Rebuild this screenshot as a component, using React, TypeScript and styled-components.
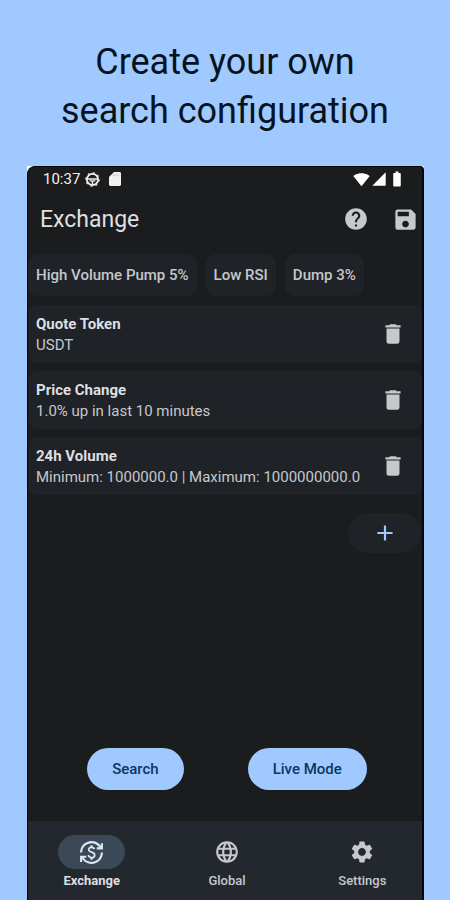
import React from 'react';
import styled, { createGlobalStyle } from 'styled-components';
import {
  MdAdd,
  MdBatteryFull,
  MdCurrencyExchange,
  MdDelete,
  MdHelp,
  MdLanguage,
  MdSave,
  MdSettings,
  MdSignalCellular4Bar,
  MdSignalWifi4Bar,
} from 'react-icons/md';

const color = {
  sky: '#9fc9ff',
  screen: '#1b1c1e',
  card: '#1f2328',
  nav: '#23282e',
  text: '#dedfe2',
  muted: '#c6c8cb',
  onSky: '#0b3765',
};

const GlobalStyle = createGlobalStyle`
  *, *::before, *::after { box-sizing: border-box; }
  body { margin: 0; background: ${color.sky}; font-family: Roboto, "Liberation Sans", sans-serif; }
  button { border: 0; padding: 0; font: inherit; cursor: pointer; }
  svg { display: block; flex: none; }
`;

const Page = styled.div`
  min-height: 100vh;
  display: flex;
  flex-direction: column;
  background: ${color.sky};
`;

const Headline = styled.h1`
  margin: 0;
  padding: 38px 16px 30px;
  font-size: 36px;
  line-height: 49px;
  font-weight: 400;
  text-align: center;
  color: #06131f;
`;

const Frame = styled.main`
  flex: 1;
  display: flex;
  margin: 0 26px 0 27px;
  background: #fff;
`;

const Phone = styled.div`
  flex: 1;
  min-width: 0;
  display: flex;
  flex-direction: column;
  padding-top: 2px;
  border: solid #050607;
  border-width: 1px 2px 0 1px;
  border-radius: 8px 4px 0 0;
  background: ${color.screen};
  color: ${color.text};
`;

const StatusBar = styled.div`
  display: flex;
  align-items: center;
  height: 20px;
  padding: 0 16px 0 15px;
  font-size: 15px;
  color: #f1f1f1;
`;

const Notices = styled.div`
  display: flex;
  align-items: center;
  gap: 9px;
  margin-left: 5px;
`;

const Signals = styled.div`
  display: flex;
  align-items: center;
  gap: 1px;
  margin-left: auto;
  color: #fff;
`;

const AppBar = styled.header`
  display: flex;
  align-items: center;
  height: 60px;
  padding: 0 3px 0 12px;
`;

const Title = styled.h2`
  flex: 1;
  margin: 0;
  font-size: 23px;
  font-weight: 400;
`;

const IconButton = styled.button`
  display: grid;
  place-items: center;
  background: none;
  color: ${color.muted};
`;

const AppActions = styled.div`
  display: flex;
  gap: 23px;
`;

const Presets = styled.div`
  display: flex;
  gap: 9px;
  padding: 5px 0 9px;
`;

const Preset = styled.button`
  height: 42px;
  padding: 0 8px;
  border-radius: 10px;
  background: ${color.card};
  color: ${color.muted};
  font-size: 15px;
  font-weight: 500;
  white-space: nowrap;
`;

const Filters = styled.ul`
  display: flex;
  flex-direction: column;
  gap: 8px;
  margin: 0;
  padding: 0 0 0 1px;
  list-style: none;
`;

const Filter = styled.li`
  display: flex;
  align-items: center;
  justify-content: space-between;
  height: 58px;
  padding: 0 16px 0 7px;
  border-radius: 8px;
  background: ${color.card};
`;

const FilterText = styled.div`
  padding-top: 2px;
`;

const FilterName = styled.h3`
  margin: 0;
  font-size: 15px;
  line-height: 21px;
  font-weight: 700;
`;

const FilterValue = styled.p`
  margin: 0;
  font-size: 15px;
  line-height: 21px;
  color: ${color.muted};
  white-space: nowrap;
`;

const AddButton = styled.button`
  display: grid;
  place-items: center;
  align-self: flex-end;
  width: 73px;
  height: 40px;
  margin: 18px 1px 0 0;
  border-radius: 20px;
  background: ${color.card};
  color: ${color.sky};
`;

const Actions = styled.div`
  display: flex;
  justify-content: center;
  gap: 64px;
  margin-top: auto;
  padding: 24px 0 31px 4px;
`;

const ActionButton = styled.button`
  height: 42px;
  padding: 0 25px;
  border-radius: 21px;
  background: ${color.sky};
  color: ${color.onSky};
  font-size: 15px;
  font-weight: 500;
`;

const NavBar = styled.nav`
  display: grid;
  grid-template-columns: repeat(3, 1fr);
  gap: 16px;
  height: 79px;
  padding: 14px 0 0 4px;
  background: ${color.nav};
`;

const NavItem = styled.button`
  display: flex;
  flex-direction: column;
  align-items: center;
  gap: 3px;
  background: none;
  color: ${color.muted};
  font-size: 13px;
  line-height: 18px;
  font-weight: 500;
  &[aria-current='page'] { color: ${color.text}; font-weight: 700; }
`;

const NavPill = styled.span<{ $active: boolean }>`
  display: grid;
  place-items: center;
  width: 67px;
  height: 34px;
  border-radius: 17px;
  background: ${(p) => (p.$active ? '#3b4858' : 'transparent')};
  color: ${(p) => (p.$active ? '#dce6f5' : color.muted)};
`;

const WheelIcon = () => (
  <svg width="15" height="15" viewBox="0 0 16 16" fill="none" stroke="currentColor" aria-hidden="true">
    <circle cx="8" cy="8" r="6" strokeWidth="1.9" />
    <circle cx="8" cy="8" r="7.2" strokeWidth="1.2" strokeDasharray="2.2 3.45" />
    <path d="M2.5 7.5h11M8 9v4.5M5 9.2L8 9.8L11 9.2" strokeWidth="1.6" />
  </svg>
);

const CardIcon = () => (
  <svg width="12" height="14" viewBox="0 0 12 14" fill="currentColor" aria-hidden="true">
    <path d="M5 0h5.6Q12 0 12 1.4v11.2Q12 14 10.6 14H1.4Q0 14 0 12.6V5z" />
    <path d="M4.8 2.2v2M7 2.2v2M9.2 2.2v2" stroke="#b9babb" strokeWidth="0.9" />
  </svg>
);

const presets = ['High Volume Pump 5%', 'Low RSI', 'Dump 3%'];

const filters = [
  { name: 'Quote Token', value: 'USDT' },
  { name: 'Price Change', value: '1.0% up in last 10 minutes' },
  { name: '24h Volume', value: 'Minimum: 1000000.0 | Maximum: 1000000000.0' },
];

const tabs = [
  { label: 'Exchange', icon: <MdCurrencyExchange size={25} />, active: true },
  { label: 'Global', icon: <MdLanguage size={26} />, active: false },
  { label: 'Settings', icon: <MdSettings size={26} />, active: false },
];

export default function App() {
  return (
    <Page>
      <GlobalStyle />
      <Headline>
        Create your own
        <br />
        search configuration
      </Headline>
      <Frame>
        <Phone>
          <StatusBar>
            <span>10:37</span>
            <Notices>
              <WheelIcon />
              <CardIcon />
            </Notices>
            <Signals>
              <MdSignalWifi4Bar size={17} />
              <MdSignalCellular4Bar size={16} />
              <MdBatteryFull size={18} />
            </Signals>
          </StatusBar>
          <AppBar>
            <Title>Exchange</Title>
            <AppActions>
              <IconButton type="button" aria-label="Help">
                <MdHelp size={26} />
              </IconButton>
              <IconButton type="button" aria-label="Save">
                <MdSave size={27} />
              </IconButton>
            </AppActions>
          </AppBar>
          <Presets>
            {presets.map((preset) => (
              <Preset type="button" key={preset}>{preset}</Preset>
            ))}
          </Presets>
          <Filters>
            {filters.map((filter) => (
              <Filter key={filter.name}>
                <FilterText>
                  <FilterName>{filter.name}</FilterName>
                  <FilterValue>{filter.value}</FilterValue>
                </FilterText>
                <IconButton type="button" aria-label={`Delete ${filter.name}`}>
                  <MdDelete size={26} />
                </IconButton>
              </Filter>
            ))}
          </Filters>
          <AddButton type="button" aria-label="Add filter">
            <MdAdd size={26} />
          </AddButton>
          <Actions>
            <ActionButton type="button">Search</ActionButton>
            <ActionButton type="button">Live Mode</ActionButton>
          </Actions>
          <NavBar>
            {tabs.map((tab) => (
              <NavItem type="button" key={tab.label} aria-current={tab.active ? 'page' : undefined}>
                <NavPill $active={tab.active}>{tab.icon}</NavPill>
                {tab.label}
              </NavItem>
            ))}
          </NavBar>
        </Phone>
      </Frame>
    </Page>
  );
}
